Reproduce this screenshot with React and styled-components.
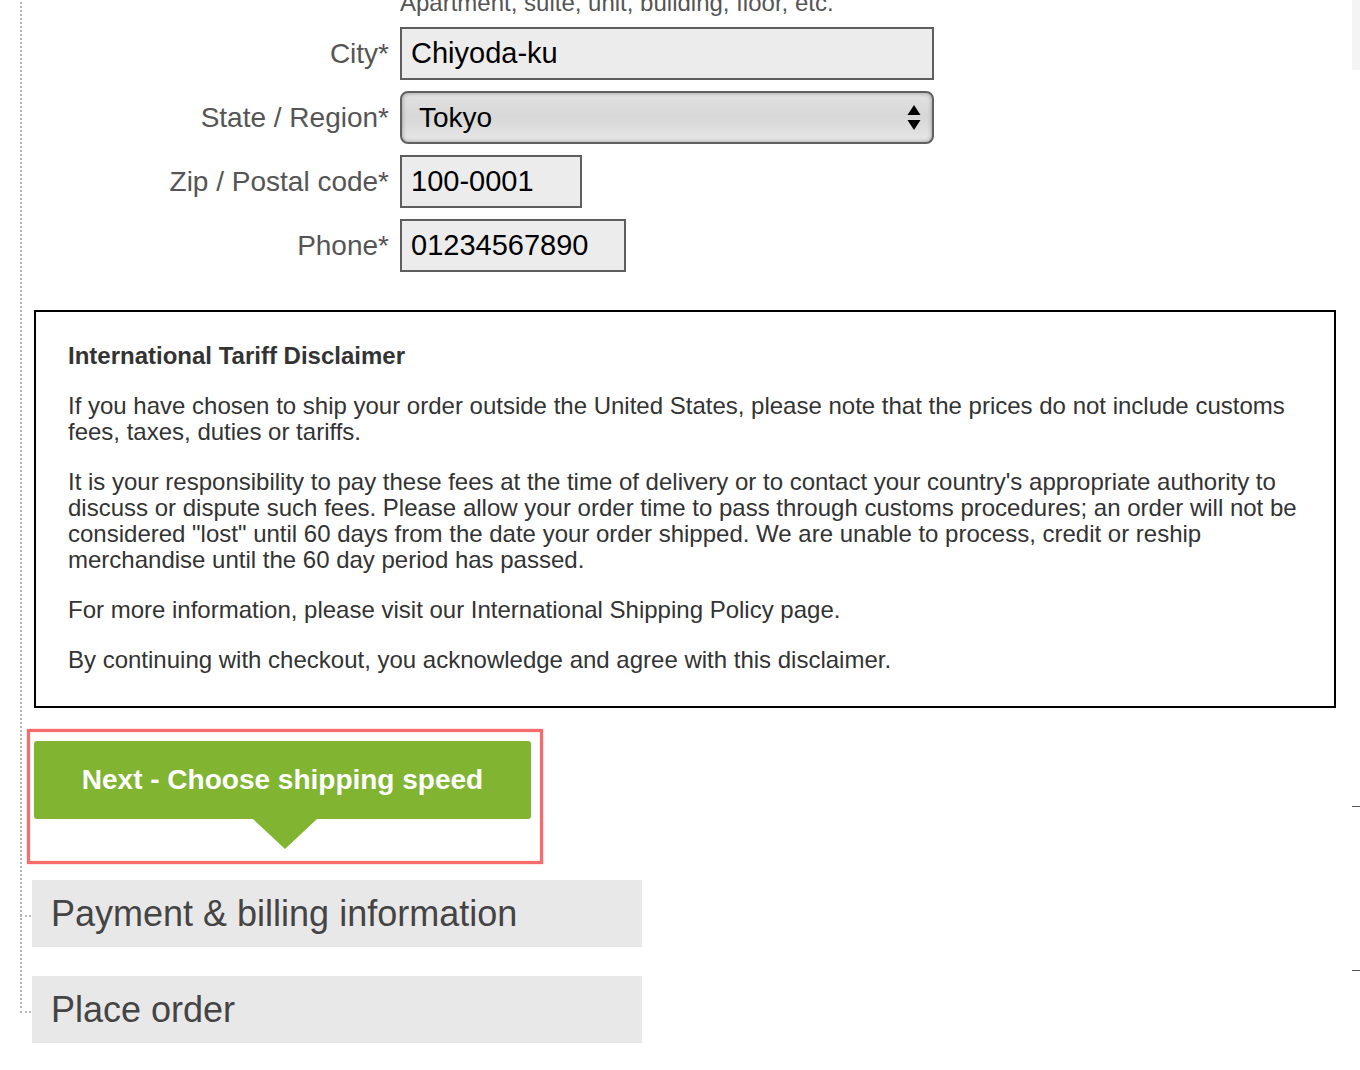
import React from "react";
import styled, { createGlobalStyle } from "styled-components";

const GlobalStyle = createGlobalStyle`
  body {
    margin: 0;
    background: #fff;
    font-family: "Liberation Sans", Arial, Helvetica, sans-serif;
    overflow: hidden;
  }
`;

const Page = styled.div`
  display: flex;
  width: 1360px;
  height: 1070px;
  overflow: hidden;
`;

const Main = styled.div`
  width: 1352px;
  flex-shrink: 0;
  padding-left: 20px;
  box-sizing: border-box;
`;

const Tree = styled.div`
  position: relative;
  margin-top: -10px;
  padding: 0 16px 0 12px;

  &::before {
    content: "";
    position: absolute;
    left: 0;
    top: 0;
    bottom: 35px;
    border-left: 2px dotted #b4b4b4;
  }
`;

const Form = styled.div`
  display: grid;
  grid-template-columns: 357px auto;
  column-gap: 11px;
  row-gap: 11px;
  align-items: center;
  justify-items: start;
`;

const Hint = styled.div`
  grid-column: 2;
  font-size: 24px;
  line-height: 26px;
  color: #555;
`;

const Label = styled.label`
  justify-self: end;
  font-size: 28px;
  line-height: 1;
  color: #555;
`;

const TextInput = styled.input`
  box-sizing: border-box;
  width: ${props => props.$width}px;
  height: 53px;
  border: 2px solid #5e5e5e;
  background: #ececec;
  padding: 0 9px;
  font-family: inherit;
  font-size: 29px;
  color: #000;
  outline: none;
`;

const SelectBox = styled.div`
  box-sizing: border-box;
  width: 534px;
  height: 53px;
  display: flex;
  align-items: center;
  justify-content: space-between;
  padding: 0 11px 0 17px;
  border: 2px solid #606060;
  border-radius: 8px;
  background: linear-gradient(#e2e2e2, #d8d8d8 45%, #dadada 60%, #e8e8e8);
  box-shadow: inset 0 0 4px rgba(0, 0, 0, 0.35);
  font-size: 28px;
  color: #000;
`;

const Disclaimer = styled.div`
  margin: 38px 0 0 2px;
  border: 2px solid #000;
  padding: 31px 26px 33px 32px;
  color: #333;
  font-size: 24px;
  line-height: 26px;

  p {
    margin: 0 0 24px;
  }
  p:last-child {
    margin-bottom: 0;
  }
`;

const Title = styled.p`
  font-weight: bold;
`;

const Highlight = styled.div`
  display: inline-flex;
  flex-direction: column;
  margin: 21px 0 0 -5px;
  padding: 9px 9px 12px 4px;
  border: 3px solid #f76b6b;
  box-shadow: 0 0 1px #f76b6b, inset 0 0 1px #f76b6b;
`;

const NextButton = styled.button`
  width: 497px;
  height: 78px;
  border: none;
  border-radius: 3px;
  background: #80b431;
  color: #fff;
  font-family: inherit;
  font-size: 28px;
  font-weight: bold;
  cursor: pointer;
`;

const Pointer = styled.div`
  align-self: center;
  margin-left: 4px;
  width: 0;
  height: 0;
  border-left: 32px solid transparent;
  border-right: 32px solid transparent;
  border-top: 30px solid #80b431;
`;

const Steps = styled.div`
  display: flex;
  flex-direction: column;
  gap: 29px;
  margin-top: 16px;
`;

const Step = styled.div`
  position: relative;
  width: 610px;
  height: 67px;
  display: flex;
  align-items: center;
  padding-left: 19px;
  box-sizing: border-box;
  background: #e8e8e8;
  color: #444;
  font-size: 36px;

  &::before {
    content: "";
    position: absolute;
    left: -12px;
    top: 35px;
    width: 11px;
    border-top: 2px dotted #b4b4b4;
  }
`;

const Sidebar = styled.div`
  width: 8px;
  flex-shrink: 0;
  display: flex;
  flex-direction: column;
`;

const SideBlock = styled.div`
  height: 70px;
  background: #f4f4f4;
`;

const SideRule = styled.div`
  height: 1px;
  margin-top: ${props => props.$gap}px;
  background: #555;
`;

function Arrows() {
  return (
    <svg width="14" height="27" viewBox="0 0 14 27">
      <path d="M0.5 11 L7 1 L13.5 11 Z" fill="#000" />
      <path d="M0.5 16 L13.5 16 L7 26 Z" fill="#000" />
    </svg>
  );
}

export default function App() {
  return (
    <Page>
      <GlobalStyle />
      <Main>
        <Tree>
          <Form>
            <Hint>Apartment, suite, unit, building, floor, etc.</Hint>

            <Label>City*</Label>
            <TextInput $width={534} value="Chiyoda-ku" readOnly />

            <Label>State / Region*</Label>
            <SelectBox>
              <span>Tokyo</span>
              <Arrows />
            </SelectBox>

            <Label>Zip / Postal code*</Label>
            <TextInput $width={182} value="100-0001" readOnly />

            <Label>Phone*</Label>
            <TextInput $width={226} value="01234567890" readOnly />
          </Form>

          <Disclaimer>
            <Title>International Tariff Disclaimer</Title>
            <p>
              If you have chosen to ship your order outside the United States, please note that the prices do not include customs fees, taxes, duties or tariffs.
            </p>
            <p>
              It is your responsibility to pay these fees at the time of delivery or to contact your country's appropriate authority to discuss or dispute such fees. Please allow your order time to pass through customs procedures; an order will not be considered "lost" until 60 days from the date your order shipped. We are unable to process, credit or reship merchandise until the 60 day period has passed.
            </p>
            <p>For more information, please visit our International Shipping Policy page.</p>
            <p>By continuing with checkout, you acknowledge and agree with this disclaimer.</p>
          </Disclaimer>

          <Highlight>
            <NextButton>Next - Choose shipping speed</NextButton>
            <Pointer />
          </Highlight>

          <Steps>
            <Step>Payment &amp; billing information</Step>
            <Step>Place order</Step>
          </Steps>
        </Tree>
      </Main>
      <Sidebar>
        <SideBlock />
        <SideRule $gap={736} />
        <SideRule $gap={163} />
      </Sidebar>
    </Page>
  );
}
